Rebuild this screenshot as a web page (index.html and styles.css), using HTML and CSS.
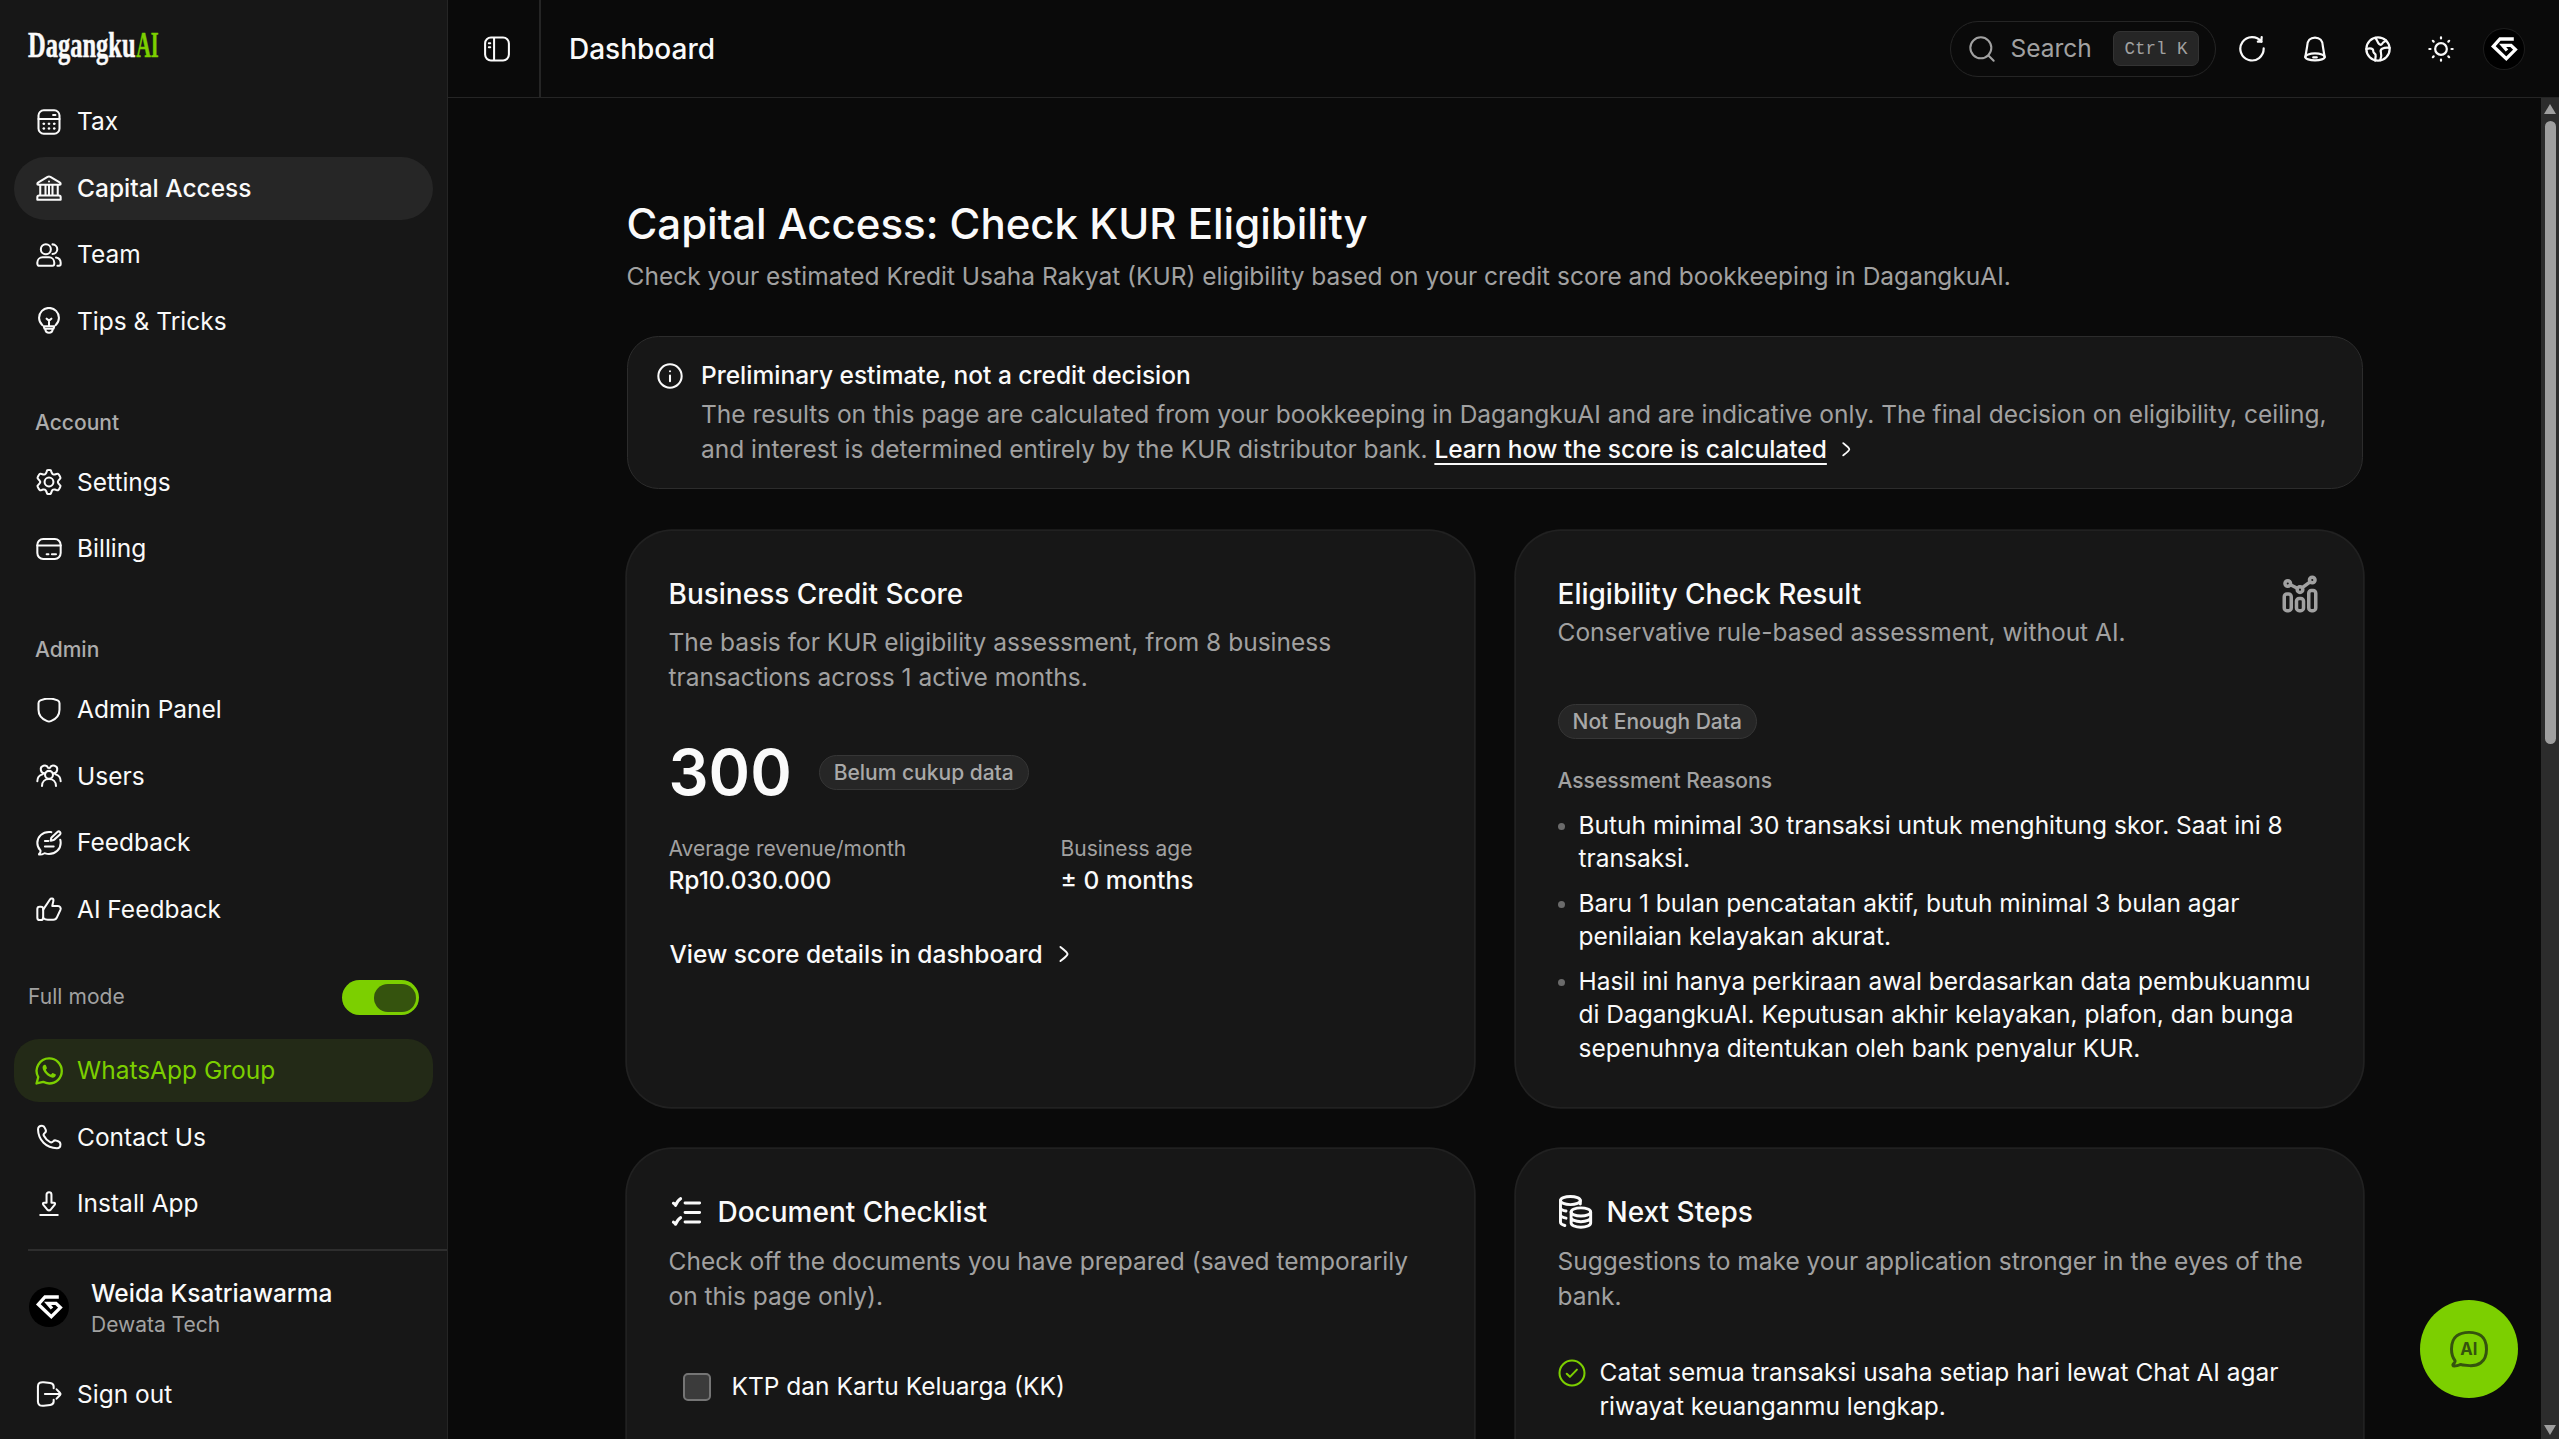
FILE: index.html
```html
<!DOCTYPE html>
<html lang="en">
<head>
<meta charset="utf-8">
<title>Dashboard</title>
<link rel="stylesheet" href="styles.css">
</head>
<body>
<svg class="sprite" aria-hidden="true">
  <symbol id="i-tax" viewBox="0 0 24 24"><rect x="3" y="2" width="18" height="20" rx="4.5"/><path d="M3 9.5h18M15.5 6h2M7.5 13.5h.01M12 13.5h.01M16.5 13.5h.01M7.5 17.5h.01M12 17.5h.01M16.5 17.5h.01"/><path d="M7.3 13.5h.6M11.7 13.5h.6M16.2 13.5h.6M7.3 17.5h.6M11.7 17.5h.6M16.2 17.5h.6"/></symbol>
  <symbol id="i-bank" viewBox="0 0 24 24"><path d="M2 8.6C2 7.900 2.300 7.600 2.900 7.200L10.800 2.500C11.700 2 12.300 2 13.200 2.500L21.100 7.200C21.700 7.600 22 7.900 22 8.600C22 9 21.700 9.200 21.200 9.200H2.800C2.300 9.200 2 9 2 8.600ZM12 6.400h.01M4.500 9.300v9.200M9 9.300v9.200M15 9.300v9.200M19.500 9.300v9.200M12 9.300v9.200M3.500 18.500h17c.8 0 1.500.7 1.500 1.500v2H2v-2c0-.8.7-1.500 1.500-1.500Z"/></symbol>
  <symbol id="i-team" viewBox="0 0 24 24"><circle cx="9.300" cy="7" r="4.300"/><path d="M15 11.100c2.300-.1 4.100-1.900 4.100-4.100S17.300 3 15 2.900M6.500 14h5.500c2.500 0 4.500 2 4.500 4.500v1.100c0 .9-.7 1.600-1.600 1.600H3.600c-.9 0-1.600-.7-1.600-1.600v-1.100C2 16 4 14 6.500 14ZM18 14.200c2.300.4 4 2.200 4 4.500v1.100c0 .8-.6 1.400-1.400 1.400h-1.400"/></symbol>
  <symbol id="i-bulb" viewBox="0 0 24 24"><path d="M6.200 15.500A8.500 8.500 0 1 1 17.800 15.500M7.500 16.500h9l-.6 2.200H8.100ZM8.800 18.900c.2 1.900 1.200 3.100 3.200 3.100s3-1.200 3.200-3.100M12 16v-4.500M10 10l2 1.700 2-1.700"/></symbol>
  <symbol id="i-gear" viewBox="0 0 24 24"><path d="M21.300 7.100l-.5-.9c-.4-.6-.5-1-.9-1.100-.4-.2-.8-.1-1.600.1l-1.300.4c-.5.100-1 0-1.400-.2l-.4-.2c-.4-.3-.7-.6-.8-1.100l-.4-1c-.2-.7-.4-1-.6-1.200-.3-.2-.7-.2-1.400-.2s-1.100 0-1.400.2c-.3.200-.4.500-.6 1.200l-.4 1c-.2.500-.5.800-.8 1.100l-.4.200c-.4.200-.9.300-1.400.2l-1.300-.4c-.8-.2-1.200-.3-1.600-.1-.4.200-.6.500-.9 1.100l-.5.900c-.4.700-.6 1-.5 1.400 0 .4.300.6.800 1.200l1 1.200c.3.300.5.800.5 1.100s-.2.800-.5 1.100l-1 1.200c-.5.600-.8.800-.8 1.200-.1.400.1.700.5 1.400l.5.900c.3.600.5.900.9 1.100.4.200.8.100 1.600-.1l1.300-.4c.5-.1 1 0 1.400.2l.4.200c.3.300.6.600.8 1.100l.4 1c.2.700.3 1 .6 1.200.3.200.7.200 1.400.2s1.100 0 1.400-.2c.2-.2.400-.5.600-1.200l.4-1c.1-.5.400-.8.800-1.100l.4-.2c.4-.2.9-.3 1.400-.2l1.300.4c.8.200 1.200.3 1.600.1.400-.2.500-.5.9-1.100l.5-.9c.4-.7.600-1 .5-1.400 0-.4-.3-.6-.8-1.200l-1-1.200c-.3-.3-.4-.8-.4-1.100s.1-.8.400-1.100l1-1.200c.5-.6.8-.8.8-1.200.1-.4-.1-.7-.5-1.400Z"/><circle cx="12" cy="12" r="3.800"/></symbol>
  <symbol id="i-card" viewBox="0 0 24 24"><rect x="2" y="3.500" width="20" height="17" rx="5"/><path d="M2 9h20M10 16.500h1.500M14.500 16.500H18"/></symbol>
  <symbol id="i-shield" viewBox="0 0 24 24"><path d="M12 2.200c-2.300 0-5.300.7-7.400 1.600C3.400 4.400 3 4.900 3 6.200v5.500c0 5.200 3.800 8.200 7 9.600.8.400 1.300.6 2 .6s1.200-.2 2-.6c3.200-1.400 7-4.400 7-9.600V6.200c0-1.300-.4-1.800-1.600-2.400C17.300 2.900 14.300 2.200 12 2.200Z"/></symbol>
  <symbol id="i-users" viewBox="0 0 24 24"><circle cx="12" cy="11" r="3.400"/><path d="M6 20.500c0-3.500 2.500-6 6-6s6 2.500 6 6M8.700 9.700a3.300 3.300 0 1 1 2.600-4.600M15.300 9.700a3.300 3.300 0 1 0-2.600-4.600M2 16.500c0-3 1.700-5.200 4.500-5.900M22 16.500c0-3-1.700-5.200-4.500-5.900"/></symbol>
  <symbol id="i-feedback" viewBox="0 0 24 24"><path d="M14 2.700c-.7-.1-1.300-.2-2-.2-5.600 0-10 4.200-10 9.400 0 2.400 1 4.600 2.500 6.200.3.400.3.900.2 1.300-.2.800-.6 1.400-1.200 1.900-.2.200-.1.600.3.600 1.500.1 2.800-.2 3.800-.9.400-.3.800-.2 1.200-.1 1 .3 2.100.5 3.200.5 5.600 0 10-4.200 10-9.500 0-1-.1-1.900-.4-2.700M8.500 15h7.500M8.500 10.200h3M15.200 9.700l-1.700.4.300-1.900c.1-.5.300-.9.600-1.200l4.800-4.500c.7-.6 1.600-.6 2.200 0s.6 1.600 0 2.200l-4.900 4.400c-.4.300-.8.500-1.300.6Z"/></symbol>
  <symbol id="i-thumb" viewBox="0 0 24 24"><rect x="2" y="10" width="5" height="11.500" rx="2"/><path d="M7 12.500l5.800-8.600c.8-1.200 3.200-1.300 3 .9l-1 4.700h4.900c1.800 0 2.800 1.500 2.100 3.200l-2.900 6.300c-.6 1.400-1.600 2.200-3.200 2.200H11c-1.700 0-2.700-.4-4-1.500"/></symbol>
  <symbol id="i-wa" viewBox="0 0 24 24"><path d="M12.200 1.200a10.700 10.700 0 0 1 0 21.500c-1.900 0-3.700-.5-5.200-1.400L1.300 22.700l1.500-5.500A10.700 10.700 0 0 1 12.200 1.200Z" stroke-width="2"/><path d="M8.200 6.700c-.9.200-1.700 1.200-1.700 2.400 0 3.600 5 8.600 8.700 8.600 1.200 0 2.600-.8 2.700-2.200.1-.5-.3-.7-2.700-1.700-.6-.2-.9 1-1.500 1.300-.8.100-4.300-3-4.400-4.200.2-.6 1-.9.900-1.500-.8-2.300-1-2.700-2-2.700Z" fill="currentColor" stroke="none"/></symbol>
  <symbol id="i-phone" viewBox="0 0 24 24"><path d="M9.200 5.900l-.8-1.700c-.4-1.100-1.200-1.900-2.400-1.900C3.800 2.300 2.600 3.400 2.600 5.600c.2 9 7 15.900 16.200 16 1.900 0 3-1.300 3-3.200 0-1.300-.7-2.200-2-2.700l-1.500-.6c-1-.4-2-.2-2.700.6-.9 1-1.700 1.200-2.900.5-2.300-1.200-3.900-2.900-5.100-5.200-.5-.9-.2-1.700.7-2.400 1-.7 1.300-1.600.9-2.700Z"/></symbol>
  <symbol id="i-install" viewBox="0 0 24 24"><path d="M9.900 11V4c0-1.300.8-2 2.100-2s2.100.7 2.100 2v7h1.900c1.400 0 1.500.8.800 1.700L13.600 16.700c-1 1-2.200 1-3.200 0l-3.200-4c-.7-.9-.6-1.700.8-1.700ZM4.500 21.500h15"/></symbol>
  <symbol id="i-signout" viewBox="0 0 24 24"><path d="M16 7V5.500c0-2-.7-2.600-3-2.900L7.500 2C4.500 1.700 2.500 2.500 2.500 5.500v13c0 3 2 3.800 5 3.500l5.500-.6c2.300-.3 3-.9 3-2.900V17M8.500 12h13M18.500 8l3 3.200c.6.600.6 1 0 1.600l-3 3.200"/></symbol>
  <symbol id="i-panel" viewBox="0 0 24 24"><rect x="1.800" y="2.200" width="20.400" height="19.600" rx="5"/><path d="M9.500 2.500v19M5 7h1.200M5 10.500h1.200"/></symbol>
  <symbol id="i-search" viewBox="0 0 24 24"><circle cx="11" cy="11" r="9"/><path d="M17.500 17.500L22 22"/></symbol>
  <symbol id="i-refresh" viewBox="0 0 24 24"><path d="M20 5.500L20.300 1.800M20.300 5.700H17M20 5.800A10 10 0 1 0 22 11.500"/></symbol>
  <symbol id="i-bell" viewBox="0 0 24 24"><path d="M5.300 9.500C5.300 5 8 2.200 12 2.200S18.700 5 18.700 9.500l1.600 9.500M5.300 9.500L3.700 19"/><ellipse cx="12" cy="18.800" rx="8.300" ry="3"/><path d="M10.500 19.200h3"/></symbol>
  <symbol id="i-globe" viewBox="0 0 24 24"><circle cx="12" cy="12" r="10"/><path d="M9.500 2.500c1 .8 1.500 1.800 2 3 .7 1.700 1.500 2.800 3 3 1.200-.1 1.200-2 2.500-2.500.8-.3 1.700-.8 2-1.300M2 12c2-.6 4.500-.6 5.500.3.800.8 0 2.200 1 3s1.800 1.200 1.500 2.700L9.500 22M22 11c-2-.4-4.500-.2-6.500.8-1.500.9-1.500 1.900-1 3.200.5 1.500.3 4-.5 6.500"/></symbol>
  <symbol id="i-sun" viewBox="0 0 24 24"><circle cx="12" cy="12" r="5"/><path d="M12 2v1M12 21v1M22 12h-1M3 12H2M19 5l-.7.700M5.700 18.300L5 19M19 19l-.7-.7M5.700 5.700L5 5"/></symbol>
  <symbol id="i-mark" viewBox="0 0 40 40"><path d="M29.800 10H16L9.300 17.300 22.300 29.600 31.400 20.600 27 16.300H18.600L23 21.500" fill="none" stroke="#fff" stroke-width="3.300"/></symbol>
  <symbol id="i-info" viewBox="0 0 24 24"><circle cx="12" cy="12" r="10"/><path d="M12 16.500v-5M12 8h.01"/></symbol>
  <symbol id="i-right" viewBox="0 0 24 24"><path d="M9 6c2 1.600 6 4.400 6 6s-4 4.400-6 6"/></symbol>
  <symbol id="i-chart" viewBox="0 0 24 24"><rect x="3" y="12" width="4" height="9.500" rx="1.500"/><rect x="10" y="14.500" width="4" height="7" rx="1.500"/><rect x="17" y="10" width="4" height="11.500" rx="1.500"/><circle cx="5" cy="6" r="1.600"/><circle cx="12" cy="9.500" r="1.600"/><circle cx="19" cy="4" r="1.600"/><path d="M6.500 6.700l4 2M13.300 8.400l4.500-3.300"/></symbol>
  <symbol id="i-checks" viewBox="0 0 24 24"><path d="M11 5.500h10M11 12h10M11 18.500h10M3 5.600s1 .5 1.500 1.500c0 0 1.500-3.500 3.500-4.600M3 18.600s1 .5 1.500 1.500c0 0 1.500-3.500 3.500-4.600"/></symbol>
  <symbol id="i-coins" viewBox="0 0 24 24"><ellipse cx="8.500" cy="3.800" rx="6.800" ry="2.800"/><ellipse cx="15.700" cy="11.600" rx="6.700" ry="2.800"/><path d="M9 11.600v7.600c0 1.600 3 2.900 6.700 2.900s6.700-1.300 6.700-2.900v-7.600M9 15.400c0 1.600 3 2.900 6.700 2.900s6.700-1.300 6.700-2.900M1.700 3.800v14.800c0 .9 1 1.700 3 2.300M1.700 8.700c0 .9 1.500 1.800 3.800 2.300M1.700 13.600c0 .9 1.500 1.800 3.800 2.300M15.300 3.800v2.400"/></symbol>
  <symbol id="i-check" viewBox="0 0 24 24"><circle cx="12" cy="12" r="10.700"/><path d="M7.500 12.700l2.700 2.600 6-6.200"/></symbol>
</svg>

<div class="app">
  <aside class="sidebar">
    <header class="brand">
      <svg class="logo" width="132" height="40" viewBox="0 0 132 40"><text x="0" y="29" textLength="107.500" lengthAdjust="spacingAndGlyphs">Dagangku</text><text class="logo-ai" x="108.200" y="29" textLength="22.500" lengthAdjust="spacingAndGlyphs">AI</text></svg>
    </header>
    <nav class="menu">
      <a class="item"><svg class="ic"><use href="#i-tax"/></svg>Tax</a>
      <a class="item active"><svg class="ic"><use href="#i-bank"/></svg>Capital Access</a>
      <a class="item"><svg class="ic"><use href="#i-team"/></svg>Team</a>
      <a class="item"><svg class="ic"><use href="#i-bulb"/></svg>Tips &amp; Tricks</a>
    </nav>
    <h3 class="group">Account</h3>
    <nav class="menu">
      <a class="item"><svg class="ic"><use href="#i-gear"/></svg>Settings</a>
      <a class="item"><svg class="ic"><use href="#i-card"/></svg>Billing</a>
    </nav>
    <h3 class="group">Admin</h3>
    <nav class="menu">
      <a class="item"><svg class="ic"><use href="#i-shield"/></svg>Admin Panel</a>
      <a class="item"><svg class="ic"><use href="#i-users"/></svg>Users</a>
      <a class="item"><svg class="ic"><use href="#i-feedback"/></svg>Feedback</a>
      <a class="item"><svg class="ic"><use href="#i-thumb"/></svg>AI Feedback</a>
    </nav>
    <footer class="side-foot">
      <div class="mode"><span>Full mode</span><span class="switch"><span class="knob"></span></span></div>
      <nav class="menu">
        <a class="item wa"><svg class="ic"><use href="#i-wa"/></svg>WhatsApp Group</a>
        <a class="item"><svg class="ic"><use href="#i-phone"/></svg>Contact Us</a>
        <a class="item"><svg class="ic"><use href="#i-install"/></svg>Install App</a>
      </nav>
      <div class="rule"></div>
      <div class="profile">
        <span class="avatar"><svg><use href="#i-mark"/></svg></span>
        <div><div class="name">Weida Ksatriawarma</div><div class="org">Dewata Tech</div></div>
      </div>
      <nav class="menu"><a class="item"><svg class="ic"><use href="#i-signout"/></svg>Sign out</a></nav>
    </footer>
  </aside>

  <div class="page">
    <header class="topbar">
      <div class="toggle"><svg class="ic"><use href="#i-panel"/></svg></div>
      <h2 class="crumb">Dashboard</h2>
      <div class="tools">
        <div class="search"><svg class="ic"><use href="#i-search"/></svg><span>Search</span><kbd>Ctrl K</kbd></div>
        <span class="tool"><svg class="ic"><use href="#i-refresh"/></svg></span>
        <span class="tool"><svg class="ic"><use href="#i-bell"/></svg></span>
        <span class="tool"><svg class="ic"><use href="#i-globe"/></svg></span>
        <span class="tool"><svg class="ic"><use href="#i-sun"/></svg></span>
        <span class="tool"><span class="avatar"><svg><use href="#i-mark"/></svg></span></span>
      </div>
    </header>
    <div class="body">
      <main class="content">
        <h1>Capital Access: Check KUR Eligibility</h1>
        <p class="muted sub">Check your estimated Kredit Usaha Rakyat (KUR) eligibility based on your credit score and bookkeeping in DagangkuAI.</p>

        <section class="alert">
          <svg class="ic"><use href="#i-info"/></svg>
          <div>
            <div class="alert-title">Preliminary estimate, not a credit decision</div>
            <p class="muted">The results on this page are calculated from your bookkeeping in DagangkuAI and are indicative only. The final decision on eligibility, ceiling,<br>and interest is determined entirely by the KUR distributor bank. <a class="learn">Learn how the score is calculated</a><svg class="ic chev"><use href="#i-right"/></svg></p>
          </div>
        </section>

        <div class="cards">
          <section class="card">
            <h2 class="title">Business Credit Score</h2>
            <p class="muted desc">The basis for KUR eligibility assessment, from 8 business<br>transactions across 1 active months.</p>
            <div class="score"><span class="num">300</span><span class="badge">Belum cukup data</span></div>
            <div class="stats">
              <div><div class="label">Average revenue/month</div><div class="value">Rp10.030.000</div></div>
              <div><div class="label">Business age</div><div class="value">± 0 months</div></div>
            </div>
            <a class="details">View score details in dashboard<svg class="ic"><use href="#i-right"/></svg></a>
          </section>

          <section class="card">
            <div class="head">
              <div><h2 class="title">Eligibility Check Result</h2><p class="muted">Conservative rule-based assessment, without AI.</p></div>
              <svg class="ic chart"><use href="#i-chart"/></svg>
            </div>
            <div class="result"><span class="badge">Not Enough Data</span></div>
            <h3 class="reasons-title">Assessment Reasons</h3>
            <ul class="reasons">
              <li><i class="dot"></i><span>Butuh minimal 30 transaksi untuk menghitung skor. Saat ini 8<br>transaksi.</span></li>
              <li><i class="dot"></i><span>Baru 1 bulan pencatatan aktif, butuh minimal 3 bulan agar<br>penilaian kelayakan akurat.</span></li>
              <li><i class="dot"></i><span>Hasil ini hanya perkiraan awal berdasarkan data pembukuanmu<br>di DagangkuAI. Keputusan akhir kelayakan, plafon, dan bunga<br>sepenuhnya ditentukan oleh bank penyalur KUR.</span></li>
            </ul>
          </section>

          <section class="card tall">
            <h2 class="title with-icon"><svg class="ic"><use href="#i-checks"/></svg>Document Checklist</h2>
            <p class="muted desc">Check off the documents you have prepared (saved temporarily<br>on this page only).</p>
            <div class="doc"><span class="box"></span>KTP dan Kartu Keluarga (KK)</div>
          </section>

          <section class="card tall">
            <h2 class="title with-icon"><svg class="ic"><use href="#i-coins"/></svg>Next Steps</h2>
            <p class="muted desc">Suggestions to make your application stronger in the eyes of the<br>bank.</p>
            <div class="step"><svg class="ic"><use href="#i-check"/></svg><span>Catat semua transaksi usaha setiap hari lewat Chat AI agar<br>riwayat keuanganmu lengkap.</span></div>
          </section>
        </div>
      </main>
      <div class="scrollbar"><span class="up"></span><span class="thumb"></span><span class="down"></span></div>
    </div>
  </div>
  <button class="fab" aria-label="AI chat">
    <svg width="42" height="42" viewBox="0 0 24 24"><path d="M8.500 21.200l3.800.3c4.300.2 9.700-1.500 9.700-9.400S17 2.500 12 2.500 2 4.300 2 12c0 3.200.8 5 1.900 6.500.3.500 0 1.300-.8 2-.6.600-.3 1.200.5 1.200 1.400 0 2.400-.3 3.200-.7.600-.2 1-.1 1.700.2Z" fill="none" stroke="currentColor" stroke-width="1.700"/><text x="11.900" y="15.700" text-anchor="middle" textLength="9.800" lengthAdjust="spacingAndGlyphs">AI</text></svg>
  </button>
</div>
</body>
</html>
```

FILE: styles.css
```css
* { box-sizing: border-box; margin: 0; padding: 0; }
body {
  background: #0a0a0a;
  color: #fafafa;
  font: 400 24.5px/35px Inter, "Liberation Sans", sans-serif;
  overflow: hidden;
}
.sprite { display: none; }
.ic {
  width: 28px;
  height: 28px;
  flex: none;
  fill: none;
  stroke: currentColor;
  stroke-width: 1.75;
  stroke-linecap: round;
  stroke-linejoin: round;
}
.app { display: flex; width: 2559px; height: 1439px; overflow: hidden; }

/* Sidebar */
.sidebar {
  width: 448px;
  flex: none;
  display: flex;
  flex-direction: column;
  background: #171717;
  border-right: 1px solid #252525;
}
.brand { height: 90px; padding: 28px 0 0 28px; }
.logo { display: block; overflow: visible; }
.logo text { font: 700 36px "Liberation Serif", serif; fill: #fafafa; stroke: #fafafa; stroke-width: .5; }
.logo .logo-ai { fill: #7ccf00; stroke: #7ccf00; }
.menu { display: flex; flex-direction: column; gap: 3.5px; padding: 0 14px; }
.item {
  display: flex;
  align-items: center;
  gap: 14px;
  height: 63px;
  padding: 0 21px;
  border-radius: 31.5px;
}
.active { background: #262626; font-weight: 500; }
.wa { background: #232a17; color: #7ccf00; border-radius: 25px; }
.group {
  height: 56px;
  margin-top: 42px;
  padding-left: 35px;
  font: 500 21px/56px Inter, "Liberation Sans", sans-serif;
  color: #acacac;
}
.side-foot { margin-top: auto; padding-bottom: 13.5px; }
.mode {
  display: flex;
  align-items: center;
  justify-content: space-between;
  height: 35px;
  margin-bottom: 24px;
  padding: 0 28px;
  font-size: 21px;
  color: #a1a1a1;
}
.mode > span:first-child { letter-spacing: .05px; line-height: 33px; margin-bottom: 2px; }
.switch { display: flex; justify-content: flex-end; width: 77px; height: 35px; padding: 3.5px; border-radius: 17.5px; background: #7ccf00; }
.knob { width: 42px; height: 28px; border-radius: 14px; background: #35530e; }
.rule { height: 2px; margin: 14px 0 24.5px 28px; background: #2e2e2e; }
.profile { display: flex; align-items: center; gap: 22px; margin-bottom: 24px; padding-left: 29px; }
.name { font-weight: 500; }
.org { font-size: 21px; line-height: 28px; color: #a1a1a1; }
.avatar { width: 40px; height: 40px; flex: none; border-radius: 50%; background: #000; display: block; }
.avatar svg { display: block; width: 40px; height: 40px; }

/* Top bar */
.page { flex: 1; display: flex; flex-direction: column; min-width: 0; }
.topbar { display: flex; align-items: center; height: 98px; flex: none; border-bottom: 1px solid #252525; }
.toggle { width: 93px; height: 97px; display: flex; align-items: center; padding-left: 35px; border-right: 2px solid #252525; }
.crumb { margin-left: 28px; padding-top: 1px; font-size: 28px; font-weight: 500; }
.tools { display: flex; align-items: center; margin-left: auto; padding-right: 23.5px; }
.search {
  display: flex;
  align-items: center;
  width: 266px;
  height: 56px;
  margin-right: 4.5px;
  padding-left: 17px;
  border: 1px solid #252525;
  border-radius: 28px;
  color: #a1a1a1;
}
.search span { margin: 0 auto 0 14.5px; }
kbd {
  height: 35px;
  margin-right: 16px;
  padding: 0 10.500px;
  border: 1px solid #333;
  border-radius: 7px;
  background: #262626;
  font: 17.5px/34px "Liberation Mono", monospace;
  white-space: pre;
}
.tool { width: 63px; height: 63px; display: flex; align-items: center; justify-content: center; }
.tool .ic { stroke-width: 1.9; }
.tool .avatar { box-shadow: 0 0 0 1px #1d1d1d; }

/* Content */
.body { flex: 1; display: flex; min-height: 0; overflow: hidden; }
.content { width: 1736px; margin: 98px auto 0; }
h1 { font-size: 42px; font-weight: 500; line-height: 56px; }
.muted { color: #a1a1a1; }
.sub { margin-top: 7px; }
.alert {
  display: flex;
  gap: 17.5px;
  margin: 42px 0;
  height: 152.5px;
  padding: 21px 27px;
  border: 1px solid #2c2c2c;
  border-radius: 31.5px;
  background: #171717;
}
.alert > .ic { margin: 3.5px 0 0 1px; }
.alert-title { font-weight: 500; margin-bottom: 3.5px; }
.alert p { white-space: nowrap; }
.learn { color: #fafafa; font-weight: 500; text-decoration: underline; text-decoration-thickness: 2px; text-underline-offset: 5px; }
.chev { width: 24.5px; height: 24.5px; margin-left: 7.500px; color: #fafafa; vertical-align: -4px; }
.cards { display: grid; grid-template-columns: 1fr 1fr; gap: 42px; }
.card {
  height: 576.5px;
  padding: 42px;
  border-radius: 45.5px;
  background: #171717;
  box-shadow: 0 0 0 1.75px #212121;
  white-space: nowrap;
}
.title { font-size: 28px; font-weight: 500; line-height: 42px; }
.desc { margin-top: 10.5px; }
.badge {
  display: inline-block;
  height: 35px;
  padding: 0 14px;
  border: 1px solid #363636;
  border-radius: 17.5px;
  background: #262626;
  color: #a9a9a9;
  font-size: 21px;
  font-weight: 500;
  line-height: 33px;
}
.score { display: flex; align-items: center; gap: 27px; height: 70px; margin-top: 42px; }
.num { font-size: 63px; font-weight: 600; line-height: 70px; }
.stats { display: grid; grid-template-columns: 1fr 1fr; gap: 21px; margin: 28px 0; }
.label { font-size: 21px; line-height: 28px; color: #a1a1a1; }
.value { font-weight: 500; }
.details { display: flex; align-items: center; gap: 7px; height: 56px; padding-left: 1px; font-weight: 500; }
.head { display: flex; justify-content: space-between; }
.chart { width: 42px; height: 42px; color: #a1a1a1; }
.result { display: flex; margin-top: 54.25px; }
.reasons-title { margin: 28px 0 14px; font-size: 21px; font-weight: 500; line-height: 28px; color: #a1a1a1; }
.reasons { list-style: none; display: flex; flex-direction: column; gap: 10.5px; line-height: 33.69px; }
.reasons li { display: flex; gap: 14px; }
.dot { width: 7px; height: 7px; flex: none; margin-top: 14px; border-radius: 50%; background: #6b6b6b; }
.with-icon { display: flex; align-items: center; gap: 14px; }
.with-icon .ic { width: 35px; height: 35px; margin-top: 1px; stroke-width: 2; }
.chart { stroke-width: 2; }
.doc { display: flex; align-items: center; gap: 21px; height: 62px; margin-top: 42px; padding-left: 14px; }
.box { width: 28px; height: 28px; border: 2px solid #757575; border-radius: 5px; background: #3b3b3b; }
.step { display: flex; gap: 14px; margin-top: 42.5px; line-height: 33.69px; }
.step .ic { margin-top: 3px; color: #7ccf00; }

/* Page scrollbar */
.scrollbar { width: 18px; flex: none; display: flex; flex-direction: column; align-items: center; padding: 6px 0 4px; background: #2c2c2c; }
.up, .down { border: 6px solid transparent; }
.up { border-top: 0; border-bottom: 10px solid #9f9f9f; }
.down { border-bottom: 0; border-top: 10px solid #9f9f9f; margin-top: auto; }
.thumb { width: 11px; height: 623px; margin-top: 7px; border-radius: 6px; background: #9f9f9f; }

/* Floating assistant button */
.fab {
  position: absolute;
  left: 2420px;
  top: 1300px;
  width: 98px;
  height: 98px;
  display: flex;
  align-items: center;
  justify-content: center;
  border: 0;
  border-radius: 50%;
  background: #7ccf00;
  color: #35530e;
}
.fab text { font: 700 10px Inter, sans-serif; fill: currentColor; }
```
